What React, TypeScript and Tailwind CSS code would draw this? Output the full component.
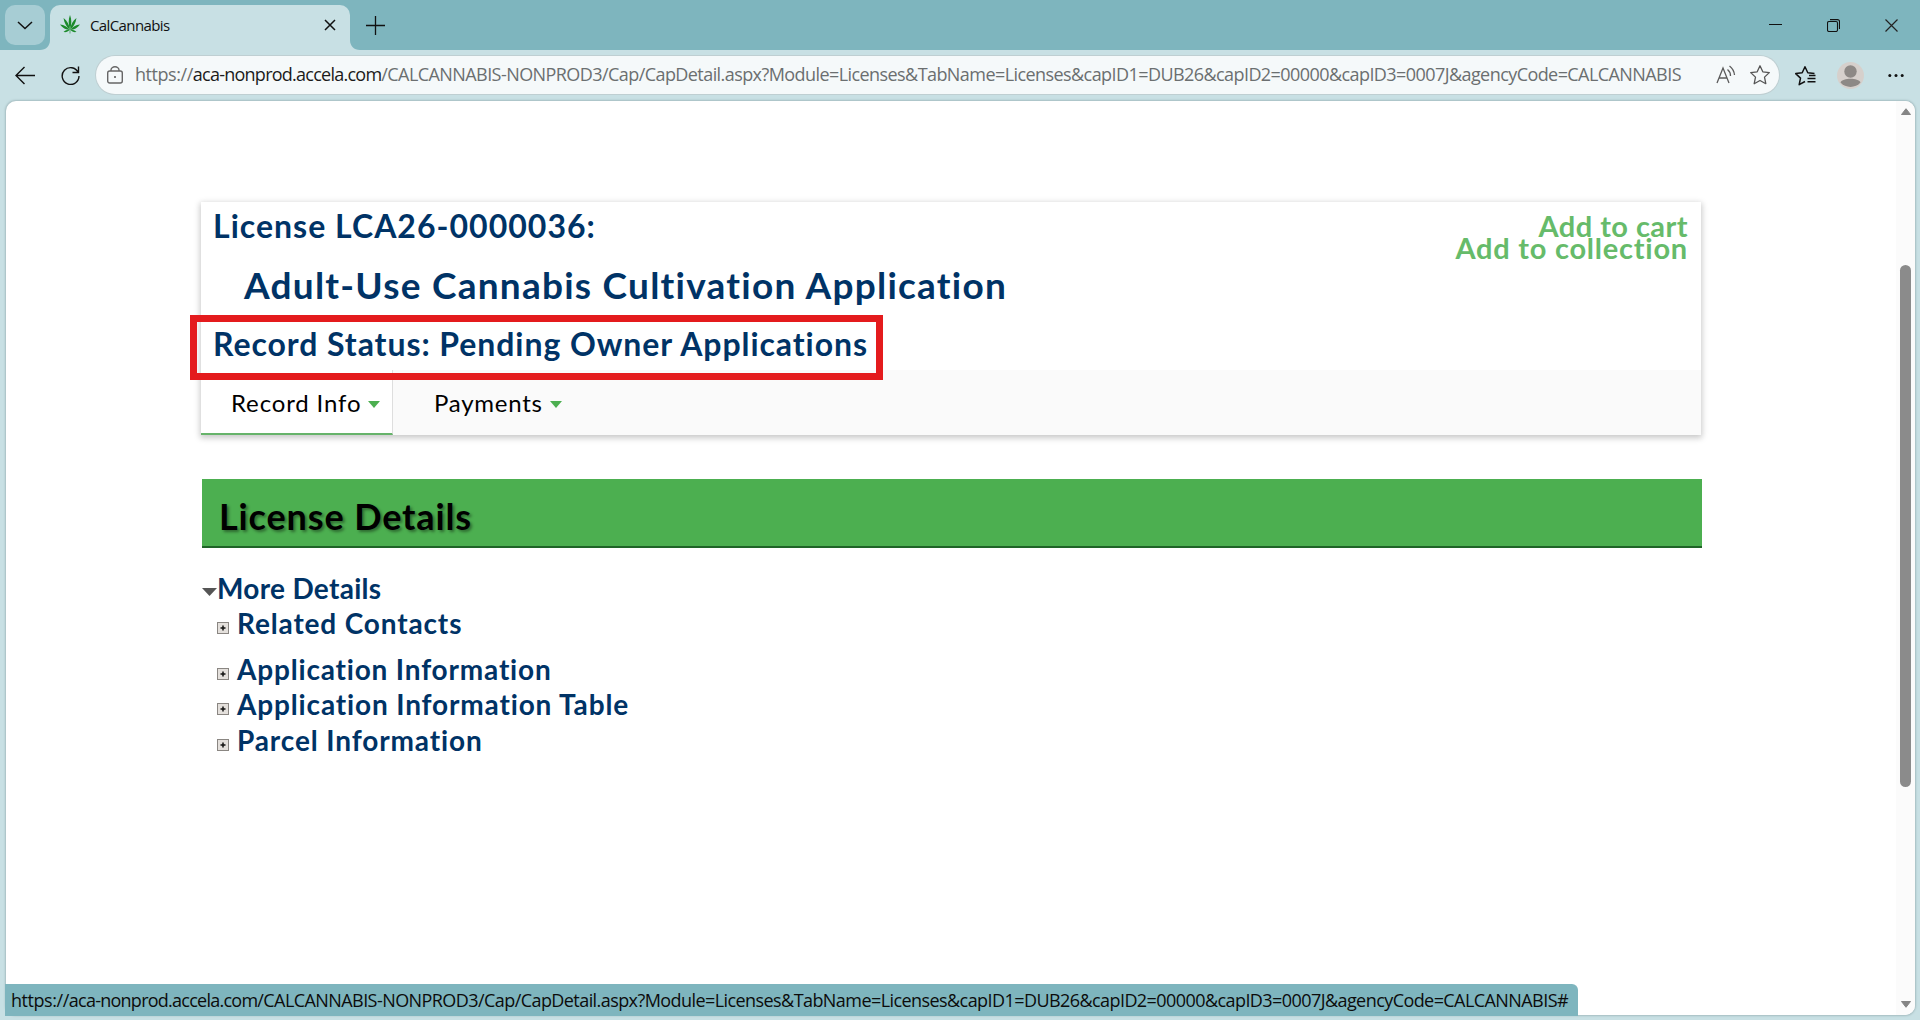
const HOST = 'aca-nonprod.accela.com';
const PATH =
  '/CALCANNABIS-NONPROD3/Cap/CapDetail.aspx?Module=Licenses&TabName=Licenses&capID1=DUB26&capID2=00000&capID3=0007J&agencyCode=CALCANNABIS';

const sections = [
  { label: 'Related Contacts', className: 'tracking-[0.85px] mb-[11px]' },
  { label: 'Application Information', className: 'tracking-[0.82px]' },
  { label: 'Application Information Table', className: 'tracking-[0.85px] mb-px' },
  { label: 'Parcel Information', className: 'tracking-[0.88px]' },
];

function LeafIcon() {
  return (
    <svg width="20" height="20" viewBox="0 0 20 20" fill="#1c8a2b">
      <path d="M10 0C8.2 4.500 8.300 9 10 14.500 11.700 9 11.800 4.500 10 0Z" />
      <path d="M3.500 3C4.300 8 6.200 11.500 9.800 14.600 9.300 9.600 7.200 6 3.500 3Z" />
      <path d="M16.500 3C15.700 8 13.800 11.500 10.200 14.600 10.700 9.600 12.800 6 16.500 3Z" />
      <path d="M0 9.500C2.600 13 5.600 14.800 9.800 15 7.300 11.800 4.300 10 0 9.500Z" />
      <path d="M20 9.500C17.400 13 14.400 14.800 10.200 15 12.700 11.800 15.700 10 20 9.500Z" />
      <path d="M3.500 17C6 17.500 8 16.800 9.800 14.800 7.300 14.500 5.300 15.200 3.500 17Z" />
      <path d="M16.500 17C14 17.500 12 16.800 10.200 14.800 12.700 14.500 14.700 15.200 16.500 17Z" />
      <path d="M9.700 14h.6v4.500h-.6z" />
    </svg>
  );
}

function TabStrip() {
  return (
    <div className="flex h-[50px] items-start bg-[#7eb5be]">
      <div className="mt-[5px] ml-[5px] flex h-10 w-10 items-center justify-center rounded-[10px] bg-[#a7cdd4]">
        <svg className="mt-0.5" width="16" height="10" viewBox="0 0 16 10" fill="none" stroke="#111" strokeWidth="1.5">
          <path d="M1 1l7 6.500L15 1" />
        </svg>
      </div>
      <div className="relative mt-[5px] ml-[5px] flex h-[45px] w-[300px] items-center rounded-t-[10px] bg-[#c8e0e4] pb-[5px]">
        {/* Flared corners where the tab meets the toolbar */}
        <svg className="absolute bottom-0 -left-2.5" width="10" height="10" viewBox="0 0 10 10" fill="#c8e0e4">
          <path d="M10 0v10H0C6 10 10 6 10 0Z" />
        </svg>
        <svg className="absolute -right-2.5 bottom-0" width="10" height="10" viewBox="0 0 10 10" fill="#c8e0e4">
          <path d="M0 0v10h10C4 10 0 6 0 0Z" />
        </svg>
        <div className="ml-2.5">
          <LeafIcon />
        </div>
        <span className="ml-2.5 flex-1 text-[15px] tracking-[-0.6px] text-[#111]">CalCannabis</span>
        <svg className="mr-3.5" width="12" height="12" viewBox="0 0 12 12" fill="none" stroke="#111" strokeWidth="1.5">
          <path d="M1 1l10 10M11 1L1 11" />
        </svg>
      </div>
      <svg className="mt-4 ml-4" width="19" height="19" viewBox="0 0 19 19" fill="none" stroke="#111" strokeWidth="1.300">
        <path d="M9.500 0v19M0 9.500h19" />
      </svg>
      <div className="ml-auto flex h-[50px] items-center pr-[22px]">
        <svg width="13" height="13" viewBox="0 0 13 13" stroke="#111">
          <path d="M0 5.500h13" />
        </svg>
        <svg className="ml-[45px]" width="13" height="13" viewBox="0 0 13 13" fill="none" stroke="#111" strokeWidth="1.100">
          <rect x=".5" y="2.500" width="10" height="10" rx="1.500" />
          <path d="M3 .6h7.500a2 2 0 0 1 2 2V10" />
        </svg>
        <svg className="ml-[45px]" width="13" height="13" viewBox="0 0 13 13" fill="none" stroke="#222" strokeWidth="1.200">
          <path d="M.5.5l12 12M12.500.5l-12 12" />
        </svg>
      </div>
    </div>
  );
}

function Toolbar() {
  return (
    <div className="flex h-[51px] items-start">
      <svg className="mt-4 ml-[15px]" width="20" height="19" viewBox="0 0 20 19" fill="none" stroke="#111" strokeWidth="1.400">
        <path d="M20 9.500H1M9.500 1L1 9.500 9.500 18" />
      </svg>
      <svg className="mt-4 ml-[26px]" width="19" height="19" viewBox="0 0 19 19" fill="none" stroke="#111" strokeWidth="1.400">
        <path d="M17.200 6.500A8.400 8.400 0 1 0 18 10M17.500.5v6h-6" />
      </svg>
      <div className="mt-1.5 ml-4 flex h-[38px] w-[1683px] items-center rounded-full bg-[#f5f9fa] shadow-[0_0_0_1px_#bfcfd2]">
        <svg className="mb-px ml-[11px]" width="16" height="18" viewBox="0 0 16 18" fill="none" stroke="#666" strokeWidth="1.400">
          <rect x=".7" y="5" width="14.600" height="12" rx="2" />
          <path d="M4 5V4a4 3.300 0 0 1 8 0V5" />
          <circle cx="8" cy="11" r="1" fill="#555" stroke="none" />
        </svg>
        <div className="ml-[12px] w-[1560px] pb-0.5 text-[18px] tracking-[-0.57px] whitespace-nowrap text-[#6b6f70]">
          <span className="tracking-[-0.45px]">https://</span>
          <span className="tracking-[-0.75px] text-[#1b1b1b]">{HOST}</span>
          {PATH}
        </div>
        <svg className="mb-px ml-[21px] shrink-0" width="20" height="19" viewBox="0 0 20 19" fill="none" stroke="#5c5c5c" strokeWidth="1.300">
          <path d="M1 18L7 3l6 15M3 13h8M11.500 4.500A8 8 0 0 1 14.500 11M13.500 1A13 13 0 0 1 18.500 10" />
        </svg>
        <svg className="ml-[14px] shrink-0" width="20" height="20" viewBox="0 0 20 20" fill="none" stroke="#555" strokeWidth="1.300" strokeLinejoin="round">
          <path d="M10 .8l2.800 6 6.500.8-4.800 4.500 1.300 6.600L10 15.500l-5.800 3.200 1.300-6.600L.7 7.600l6.500-.8z" />
        </svg>
      </div>
      <svg className="mt-4 ml-4" width="21" height="20" viewBox="0 0 21 20" fill="none" stroke="#111" strokeWidth="1.500" strokeLinejoin="round">
        <path d="M19.500 7.500L12.800 6.800 10 .8l-2.800 6-6.500.8 4.800 4.500-1.300 6.600L10 15.500M14 9.500h6.500M12.500 12.500h8M12.500 15.800h8" />
      </svg>
      <svg className="mt-3 ml-[21px]" width="27" height="27" viewBox="0 0 27 27">
        <circle cx="13.500" cy="13.500" r="13.500" fill="#d6d0cc" />
        <circle cx="13.500" cy="9.500" r="6.200" fill="#8d8986" />
        <path d="M3.500 20.500c2-5 18-5 20 0a13.500 13.500 0 0 1-20 0Z" fill="#8d8986" />
      </svg>
      <svg className="mt-[23px] ml-6" width="16" height="5" viewBox="0 0 16 5" fill="#111">
        <circle cx="1.800" cy="2.500" r="1.500" />
        <circle cx="8" cy="2.500" r="1.500" />
        <circle cx="14.200" cy="2.500" r="1.500" />
      </svg>
    </div>
  );
}

function Caret() {
  return (
    <svg className="mt-[3px]" width="12" height="7" viewBox="0 0 12 7" fill="#4caf50">
      <path d="M0 0h12L6 7z" />
    </svg>
  );
}

function PlusBox() {
  return (
    <svg className="mt-[9px]" width="12" height="12" viewBox="0 0 12 12">
      <rect x=".5" y=".5" width="11" height="11" fill="#e4e0dc" stroke="#8a8682" />
      <path d="M6 3.500v5M3.500 6h5" stroke="#111" strokeWidth="1.500" />
    </svg>
  );
}

function RecordCard() {
  return (
    <div className="relative h-[233px] w-[1500px] bg-white shadow-[0_2px_6px_1px_rgba(0,0,0,0.22)]">
      <div className="flex h-[168px] justify-between pr-[13px] pl-3 font-bold text-[#003366]">
        <div className="pt-1 whitespace-nowrap">
          <h1 className="text-[32px] leading-10 tracking-[1.02px]">License LCA26-0000036:</h1>
          <h2 className="mt-3.5 pl-[31px] text-[37px] leading-[50px] tracking-[1.24px]">
            Adult-Use Cannabis Cultivation Application
          </h2>
          <p className="mt-3.5 text-[32px] leading-10 tracking-[0.93px]">Record Status: Pending Owner Applications</p>
        </div>
        <div className="pt-[13px] text-right text-[29px] leading-[22px] text-[#66bb6a]">
          <p className="tracking-[0.45px]">Add to cart</p>
          <p className="tracking-[0.76px]">Add to collection</p>
        </div>
      </div>
      <div className="flex h-[65px] bg-[#fafafa] text-2xl text-black">
        <div className="flex w-48 items-center gap-[7px] border-r border-b-2 border-r-[#dedede] border-b-[#66b36a] bg-white pt-0.5 pl-[30px]">
          <span className="tracking-[0.85px]">Record Info</span>
          <Caret />
        </div>
        <div className="flex items-center gap-[7px] pl-[41px]">
          <span className="tracking-[0.75px]">Payments</span>
          <Caret />
        </div>
      </div>
      {/* Highlight frame around the record status */}
      <div className="absolute top-[113px] -left-[11px] h-[65px] w-[693px] border-[7px] border-[#e41b1d]" />
    </div>
  );
}

function Scrollbar() {
  return (
    <div className="flex w-[19px] flex-col items-center bg-[#fbfbfb] py-[7px]">
      <svg width="10" height="7" viewBox="0 0 10 7" fill="#858585" stroke="#858585" strokeLinejoin="round">
        <path d="M.5 6.500L5 .7l4.500 5.800z" />
      </svg>
      <div className="mt-[150px] h-[522px] w-[11px] rounded-full bg-[#8b8b8b]" />
      <svg className="mt-auto" width="10" height="7" viewBox="0 0 10 7" fill="#858585" stroke="#858585" strokeLinejoin="round">
        <path d="M.5.5L5 6.300 9.500.5z" />
      </svg>
    </div>
  );
}

export default function App() {
  return (
    <div className="relative flex h-[1020px] w-[1920px] flex-col overflow-hidden bg-[#c8e0e4] font-['Open_Sans','Noto_Sans',sans-serif]">
      <TabStrip />
      <Toolbar />
      <div className="ml-1.5 flex h-[914px] w-[1909px] overflow-hidden rounded-[10px] bg-white shadow-[0_0_2px_1px_#a5bdc1]">
        <div className="flex-1 pt-[101px] pl-[195px] font-['Lato',sans-serif]">
          <RecordCard />
          <div className="mt-11 ml-px flex h-[69px] w-[1500px] items-center border-b-2 border-[#1f6427] bg-[#4caf50] pt-[7px] pl-[17px]">
            <h2 className="text-[36px] font-bold tracking-[0.87px] text-black [text-shadow:2px_2px_3px_rgba(0,0,0,0.4)]">
              License Details
            </h2>
          </div>
          <div className="mt-[23px] text-[28px] leading-[35px] font-bold text-[#003366]">
            <div className="flex items-center">
              <svg className="mt-1.5 ml-px" width="15" height="8" viewBox="0 0 15 8">
                <path d="M0 0h15L7.500 8z" fill="#555" />
              </svg>
              <span className="tracking-[0.3px]">More Details</span>
            </div>
            {sections.map((s) => (
              <div key={s.label} className={`flex items-center gap-2 pl-4 ${s.className}`}>
                <PlusBox />
                <span>{s.label}</span>
              </div>
            ))}
          </div>
        </div>
        <Scrollbar />
      </div>
      {/* Link status bubble */}
      <div className="absolute top-[984px] left-[5px] flex h-8 w-[1573px] items-center rounded-tr-[6px] bg-[#7eb5be] pl-1.5 text-[18px] tracking-[-0.57px] whitespace-nowrap text-[#0c0c0c]">
        <span className="tracking-[-0.45px]">https://</span>
        <span className="tracking-[-0.75px]">{HOST}</span>
        {`${PATH}#`}
      </div>
    </div>
  );
}
